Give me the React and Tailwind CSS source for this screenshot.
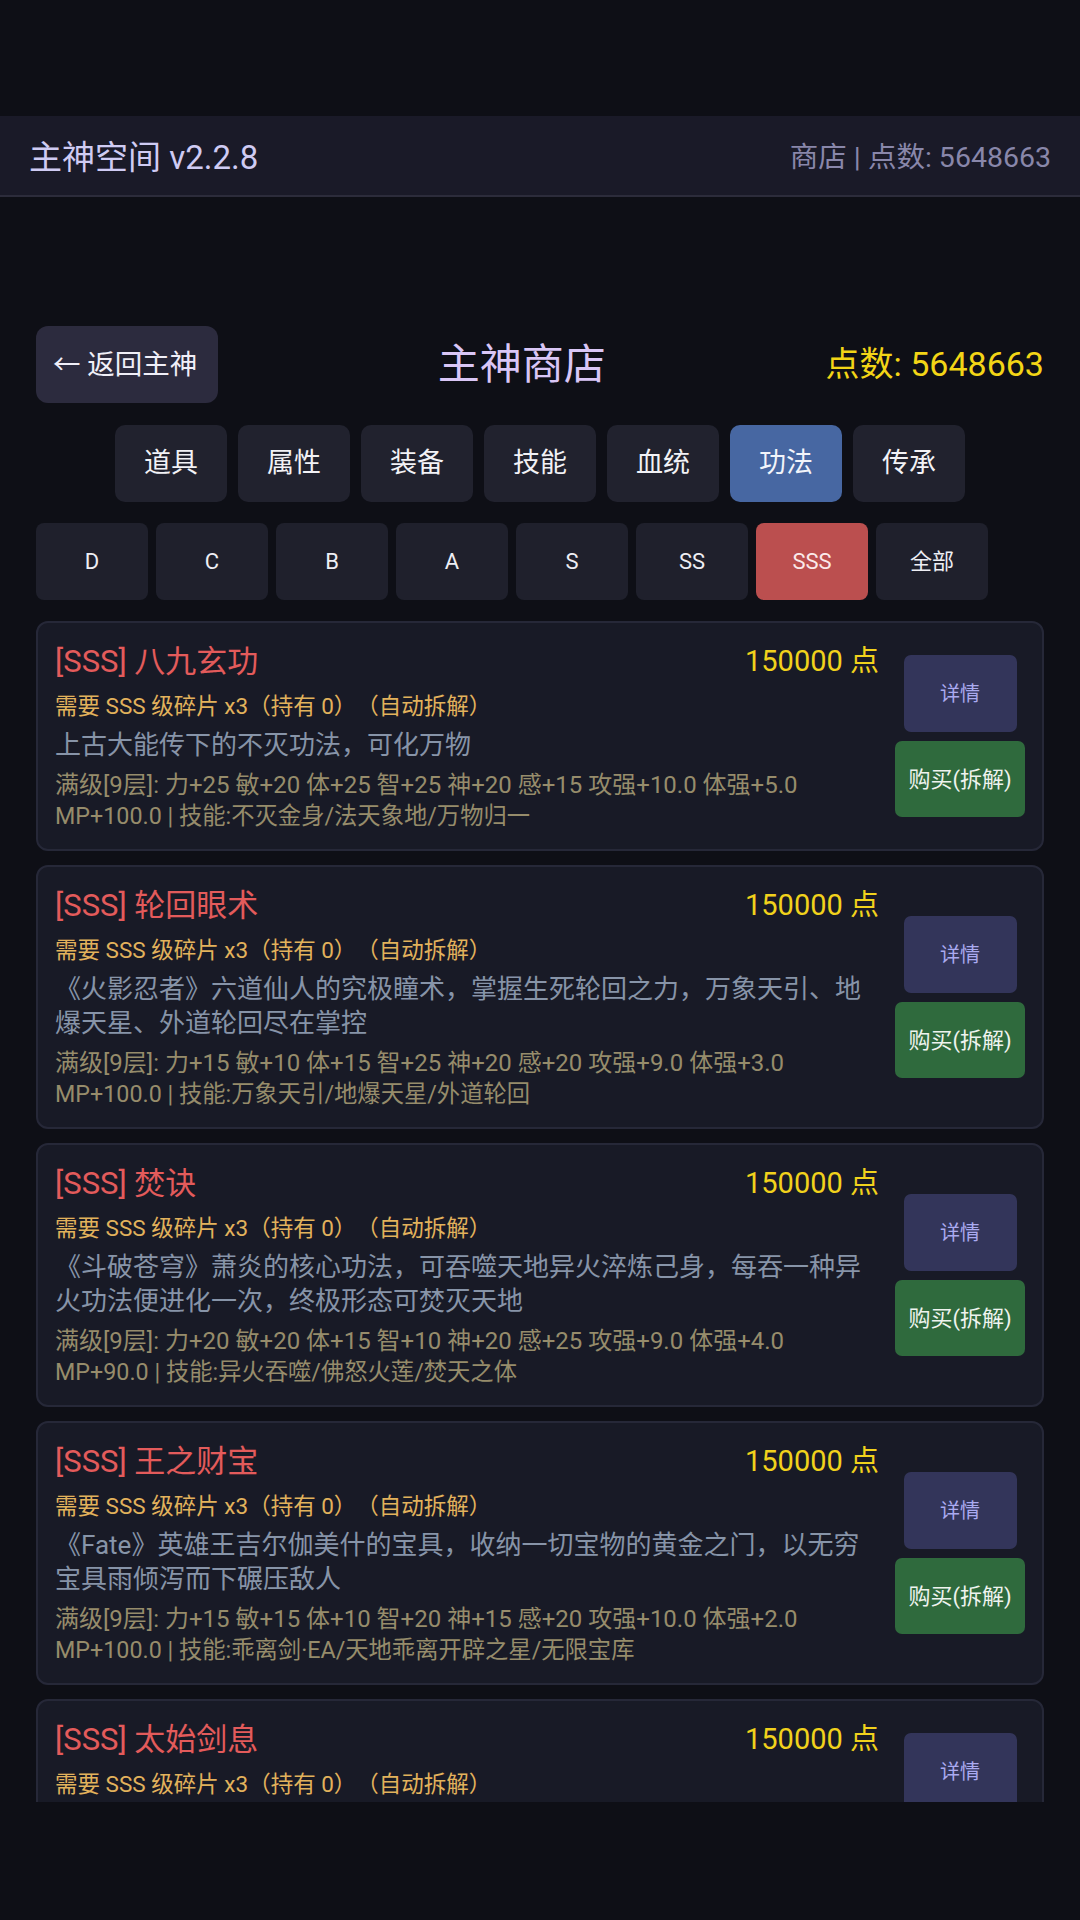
import React from "react";

const categories = ["道具", "属性", "装备", "技能", "血统", "功法", "传承"];
const ranks = ["D", "C", "B", "A", "S", "SS", "SSS", "全部"];

const items = [
  {
    name: "八九玄功",
    desc: "上古大能传下的不灭功法，可化万物",
    stats: "满级[9层]: 力+25 敏+20 体+25 智+25 神+20 感+15 攻强+10.0 体强+5.0",
    extra: "MP+100.0 | 技能:不灭金身/法天象地/万物归一",
  },
  {
    name: "轮回眼术",
    desc: "《火影忍者》六道仙人的究极瞳术，掌握生死轮回之力，万象天引、地爆天星、外道轮回尽在掌控",
    stats: "满级[9层]: 力+15 敏+10 体+15 智+25 神+20 感+20 攻强+9.0 体强+3.0",
    extra: "MP+100.0 | 技能:万象天引/地爆天星/外道轮回",
  },
  {
    name: "焚诀",
    desc: "《斗破苍穹》萧炎的核心功法，可吞噬天地异火淬炼己身，每吞一种异火功法便进化一次，终极形态可焚灭天地",
    stats: "满级[9层]: 力+20 敏+20 体+15 智+10 神+20 感+25 攻强+9.0 体强+4.0",
    extra: "MP+90.0 | 技能:异火吞噬/佛怒火莲/焚天之体",
  },
  {
    name: "王之财宝",
    desc: "《Fate》英雄王吉尔伽美什的宝具，收纳一切宝物的黄金之门，以无穷宝具雨倾泻而下碾压敌人",
    stats: "满级[9层]: 力+15 敏+15 体+10 智+20 神+15 感+20 攻强+10.0 体强+2.0",
    extra: "MP+100.0 | 技能:乖离剑·EA/天地乖离开辟之星/无限宝库",
  },
  {
    name: "太始剑息",
    desc: "太古剑修以一息化万剑的无上心法，剑意所至，万法皆破",
    stats: "满级[9层]: 力+20 敏+25 体+10 智+15 神+20 感+20 攻强+10.0 体强+3.0",
    extra: "MP+100.0 | 技能:太始一剑/万剑归宗/剑息不灭",
  },
];

function Card({ item }) {
  return (
    <div className="shrink-0 rounded-[12px] border-2 border-[#262838] bg-[#181a26] px-[17px] py-[17px] flex items-center gap-[16px]">
      <div className="flex-1 min-w-0">
        <div className="flex items-center justify-between h-[44px]">
          <span className="text-[31px] text-[#e35b5b]">[SSS] {item.name}</span>
          <span className="text-[29px] text-[#f1d21c]">150000 点</span>
        </div>
        <div className="mt-[6px] text-[22.5px] leading-[32px] text-[#e2b25c]">
          需要 SSS 级碎片 x3（持有 0）（自动拆解）
        </div>
        <div className="mt-[6px] text-[26px] leading-[34px] text-[#8794a8]">{item.desc}</div>
        <div className="mt-[8px] leading-[31px] text-[#968c6b]">
          <div className="text-[24px]">{item.stats}</div>
          <div className="text-[23.3px]">{item.extra}</div>
        </div>
      </div>
      <div className="w-[130px] shrink-0 flex flex-col items-center gap-[9px]">
        <div className="w-[113px] h-[77px] rounded-[7px] bg-[#33355a] flex items-center justify-center text-[20px] text-[#aaaaf0]">
          详情
        </div>
        <div className="w-[130px] h-[76px] rounded-[7px] bg-[#2f6a3d] flex items-center justify-center text-[22px] text-[#eef3ee]">
          购买(拆解)
        </div>
      </div>
    </div>
  );
}

export default function App() {
  return (
    <div className="w-[1080px] h-[1920px] overflow-hidden bg-[#0e0f16] font-[Roboto,'Noto_Sans_CJK_SC',sans-serif] [text-spacing-trim:space-all]">
      <div className="h-[116px]" />
      <header className="h-[81px] bg-[#1a1a28] border-b-2 border-[#2c2c3b] flex items-center justify-between px-[29px] pt-[5px]">
        <span className="text-[33px] text-[#cfcbf3]">主神空间 v2.2.8</span>
        <span className="text-[28.5px] text-[#8987aa]">商店 | 点数: 5648663</span>
      </header>
      <main className="px-[36px] pt-[129px]">
        <div className="flex items-center justify-between h-[77px]">
          <div className="h-[77px] w-[182px] rounded-[12px] bg-[#2c2b3e] flex items-center pl-[17px] text-[27.5px] text-[#f0eff8]">
            ← 返回主神
          </div>
          <span className="text-[42px] text-[#d9c6f6]">主神商店</span>
          <span className="text-[34px] text-[#f3d516]">点数: 5648663</span>
        </div>
        <div className="mt-[22px] flex justify-center gap-[11px]">
          {categories.map((c) => (
            <div
              key={c}
              className={
                c === "功法"
                  ? "w-[112px] h-[77px] rounded-[10px] bg-[#4767a2] flex items-center justify-center text-[27px] text-[#f2f4fa]"
                  : "w-[112px] h-[77px] rounded-[10px] bg-[#21222e] flex items-center justify-center text-[27px] text-[#f2f2f6]"
              }
            >
              {c}
            </div>
          ))}
        </div>
        <div className="mt-[21px] flex gap-[8px]">
          {ranks.map((r) => (
            <div
              key={r}
              className={
                r === "SSS"
                  ? "w-[112px] h-[77px] rounded-[8px] bg-[#bb4f4f] flex items-center justify-center text-[22px] text-[#fbeaea]"
                  : "w-[112px] h-[77px] rounded-[8px] bg-[#1f202c] flex items-center justify-center text-[22px] text-[#eeeef4]"
              }
            >
              {r}
            </div>
          ))}
        </div>
        <div className="mt-[21px] h-[1181px] overflow-hidden flex flex-col gap-[14px]">
          {items.map((it) => (
            <Card key={it.name} item={it} />
          ))}
        </div>
      </main>
    </div>
  );
}
